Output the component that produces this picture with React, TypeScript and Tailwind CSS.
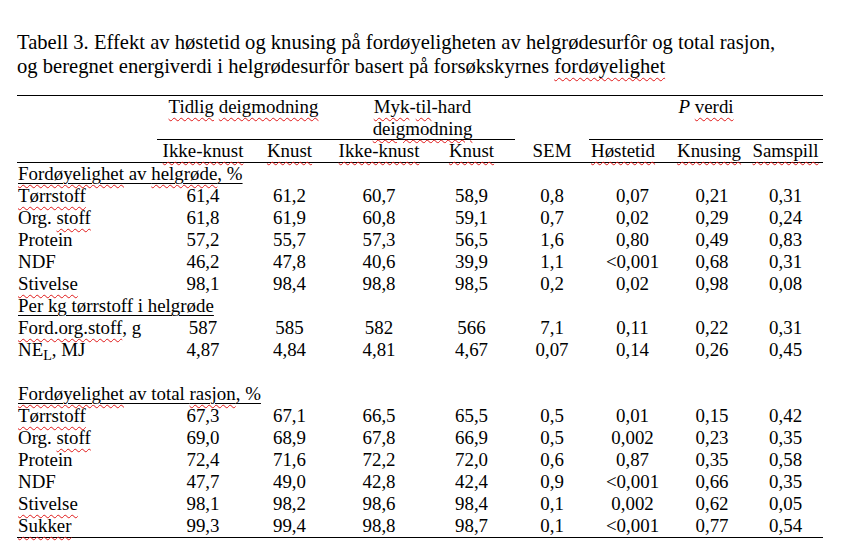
import React from "react";

const Wv = ({ children }: { children: React.ReactNode }) => (
  <span className="underline decoration-wavy decoration-[#e01818] decoration-1 underline-offset-[4px]">
    {children}
  </span>
);

const Ul = ({ children }: { children: React.ReactNode }) => (
  <span className="underline decoration-black decoration-1 underline-offset-[3px]">{children}</span>
);

type Row = { label: React.ReactNode; v: string[] };

const sec1: Row[] = [
  { label: <Wv>Tørrstoff</Wv>, v: ["61,4", "61,2", "60,7", "58,9", "0,8", "0,07", "0,21", "0,31"] },
  { label: <>Org. <Wv>stoff</Wv></>, v: ["61,8", "61,9", "60,8", "59,1", "0,7", "0,02", "0,29", "0,24"] },
  { label: <>Protein</>, v: ["57,2", "55,7", "57,3", "56,5", "1,6", "0,80", "0,49", "0,83"] },
  { label: <>NDF</>, v: ["46,2", "47,8", "40,6", "39,9", "1,1", "<0,001", "0,68", "0,31"] },
  { label: <Wv>Stivelse</Wv>, v: ["98,1", "98,4", "98,8", "98,5", "0,2", "0,02", "0,98", "0,08"] },
];

const sec2: Row[] = [
  { label: <><Wv>Ford.org.stoff</Wv>, g</>, v: ["587", "585", "582", "566", "7,1", "0,11", "0,22", "0,31"] },
  { label: <>NE<sub>L</sub>, MJ</>, v: ["4,87", "4,84", "4,81", "4,67", "0,07", "0,14", "0,26", "0,45"] },
];

const sec3: Row[] = [
  { label: <Wv>Tørrstoff</Wv>, v: ["67,3", "67,1", "66,5", "65,5", "0,5", "0,01", "0,15", "0,42"] },
  { label: <>Org. <Wv>stoff</Wv></>, v: ["69,0", "68,9", "67,8", "66,9", "0,5", "0,002", "0,23", "0,35"] },
  { label: <>Protein</>, v: ["72,4", "71,6", "72,2", "72,0", "0,6", "0,87", "0,35", "0,58"] },
  { label: <>NDF</>, v: ["47,7", "49,0", "42,8", "42,4", "0,9", "<0,001", "0,66", "0,35"] },
  { label: <Wv>Stivelse</Wv>, v: ["98,1", "98,2", "98,6", "98,4", "0,1", "0,002", "0,62", "0,05"] },
  { label: <Wv>Sukker</Wv>, v: ["99,3", "99,4", "98,8", "98,7", "0,1", "<0,001", "0,77", "0,54"] },
];

const DataRow = ({ r }: { r: Row }) => (
  <tr className="h-[22px]">
    <td className="p-0 pl-[1px] text-left whitespace-nowrap">{r.label}</td>
    {r.v.map((x, i) => (
      <td key={i} className="p-0 text-center whitespace-nowrap">
        {x}
      </td>
    ))}
  </tr>
);

const Heading = ({ children }: { children: React.ReactNode }) => (
  <tr className="h-[22px]">
    <td colSpan={9} className="p-0 pl-[1px] text-left whitespace-nowrap">
      <Ul>{children}</Ul>
    </td>
  </tr>
);

export default function App() {
  return (
    <div className="min-h-[550px] w-[842px] bg-white text-black font-['Liberation_Serif',_serif] pl-[17px] pt-[30px]">
      <div className="text-[20.6px] leading-[24px] whitespace-nowrap">
        Tabell 3. Effekt av høstetid og knusing på fordøyeligheten av helgrødesurfôr og total rasjon,
        <br />
        og beregnet energiverdi i helgrødesurfôr basert på forsøkskyrnes <Wv>fordøyelighet</Wv>
      </div>
      <table className="mt-[17px] w-[806px] table-fixed border-separate border-spacing-0 border-t border-black text-[18.9px] leading-[22px]">
        <colgroup>
          <col className="w-[140px]" />
          <col className="w-[92px]" />
          <col className="w-[81px]" />
          <col className="w-[98px]" />
          <col className="w-[87px]" />
          <col className="w-[74px]" />
          <col className="w-[87px]" />
          <col className="w-[72px]" />
          <col className="w-[75px]" />
        </colgroup>
        <tbody>
          <tr>
            <td className="p-0"></td>
            <td colSpan={2} className="p-0 align-top text-center border-b border-black leading-[21.5px]">
              <Wv>Tidlig</Wv> <Wv>deigmodning</Wv>
            </td>
            <td colSpan={2} className="p-0 align-top text-center border-b border-black leading-[21.5px]">
              <Wv>Myk</Wv>-<Wv>til</Wv>-hard
              <br />
              <Wv>deigmodning</Wv>
            </td>
            <td className="p-0"></td>
            <td colSpan={3} className="p-0 align-top text-center border-b border-black leading-[21.5px]">
              <i>P</i> <Wv>verdi</Wv>
            </td>
          </tr>
          <tr className="h-[22px]">
            <td className="p-0 border-b border-black"></td>
            <td className="p-0 text-center border-b border-black whitespace-nowrap">
              <Wv>Ikke-knust</Wv>
            </td>
            <td className="p-0 text-center border-b border-black whitespace-nowrap">
              <Wv>Knust</Wv>
            </td>
            <td className="p-0 text-center border-b border-black whitespace-nowrap">
              <Wv>Ikke-knust</Wv>
            </td>
            <td className="p-0 text-center border-b border-black whitespace-nowrap">
              <Wv>Knust</Wv>
            </td>
            <td className="p-0 text-center border-b border-black whitespace-nowrap">SEM</td>
            <td className="p-0 pl-[2px] text-left border-b border-black whitespace-nowrap">
              <Wv>Høstetid</Wv>
            </td>
            <td className="p-0 pl-[1px] text-left border-b border-black whitespace-nowrap">
              <Wv>Knusing</Wv>
            </td>
            <td className="p-0 text-center border-b border-black whitespace-nowrap">
              <Wv>Samspill</Wv>
            </td>
          </tr>
          <Heading>
            <Wv>Fordøyelighet</Wv> av <Wv>helgrøde</Wv>, %
          </Heading>
          {sec1.map((r, i) => (
            <DataRow key={"a" + i} r={r} />
          ))}
          <Heading>Per kg tørrstoff i helgrøde</Heading>
          {sec2.map((r, i) => (
            <DataRow key={"b" + i} r={r} />
          ))}
          <tr className="h-[22px]">
            <td colSpan={9} className="p-0"></td>
          </tr>
          <Heading>
            <Wv>Fordøyelighet</Wv> av total <Wv>rasjon</Wv>, %
          </Heading>
          {sec3.map((r, i) => (
            <tr key={"c" + i} className="h-[22px]">
              <td
                className={
                  "p-0 pl-[1px] text-left whitespace-nowrap " +
                  (i === sec3.length - 1 ? "border-b border-black" : "")
                }
              >
                {r.label}
              </td>
              {r.v.map((x, j) => (
                <td
                  key={j}
                  className={
                    "p-0 text-center whitespace-nowrap " + (i === sec3.length - 1 ? "border-b border-black" : "")
                  }
                >
                  {x}
                </td>
              ))}
            </tr>
          ))}
        </tbody>
      </table>
    </div>
  );
}
